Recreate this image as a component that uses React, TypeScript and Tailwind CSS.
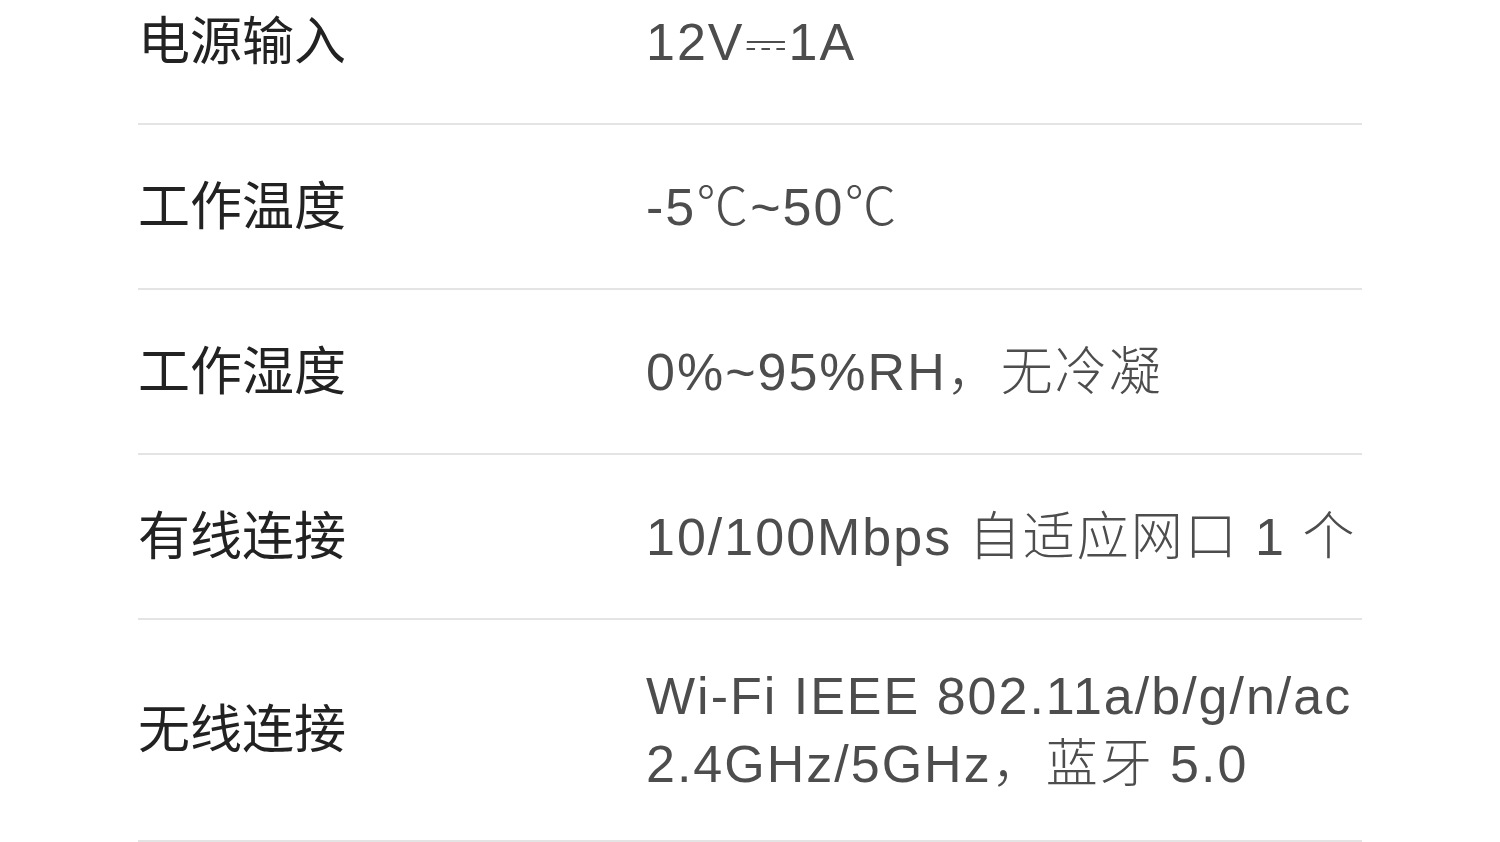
const specs = [
  { label: "电源输入", value: ["12V⎓1A"] },
  { label: "工作温度", value: ["-5℃~50℃"] },
  { label: "工作湿度", value: ["0%~95%RH，无冷凝"] },
  { label: "有线连接", value: ["10/100Mbps 自适应网口 1 个"] },
  { label: "无线连接", value: ["Wi-Fi IEEE 802.11a/b/g/n/ac", "2.4GHz/5GHz，蓝牙 5.0"] },
];

function SpecRow({ label, value }: { label: string; value: string[] }) {
  const multi = value.length > 1;
  return (
    <div
      className={`flex items-center border-b-2 border-[#e4e4e4] ${
        multi ? "py-[42px]" : "pt-[48px] pb-[47px]"
      }`}
    >
      <div className="w-[508px] shrink-0 text-[52px] leading-[68px] text-[#222]">
        {label}
      </div>
      <div className="flex-1 text-[52px] leading-[68px] tracking-[2px] font-light text-[#4d4d4d]">
        {value.map((line) => (
          <div key={line} className="whitespace-nowrap">
            {line}
          </div>
        ))}
      </div>
    </div>
  );
}

export default function App() {
  return (
    <div
      className="h-[842px] w-full overflow-hidden bg-white"
      style={{ fontFamily: '"Liberation Sans", "Noto Sans CJK SC", sans-serif' }}
    >
      <div className="-mt-[40px] ml-[138px] w-[1224px]">
        {specs.map((s) => (
          <SpecRow key={s.label} label={s.label} value={s.value} />
        ))}
      </div>
    </div>
  );
}
